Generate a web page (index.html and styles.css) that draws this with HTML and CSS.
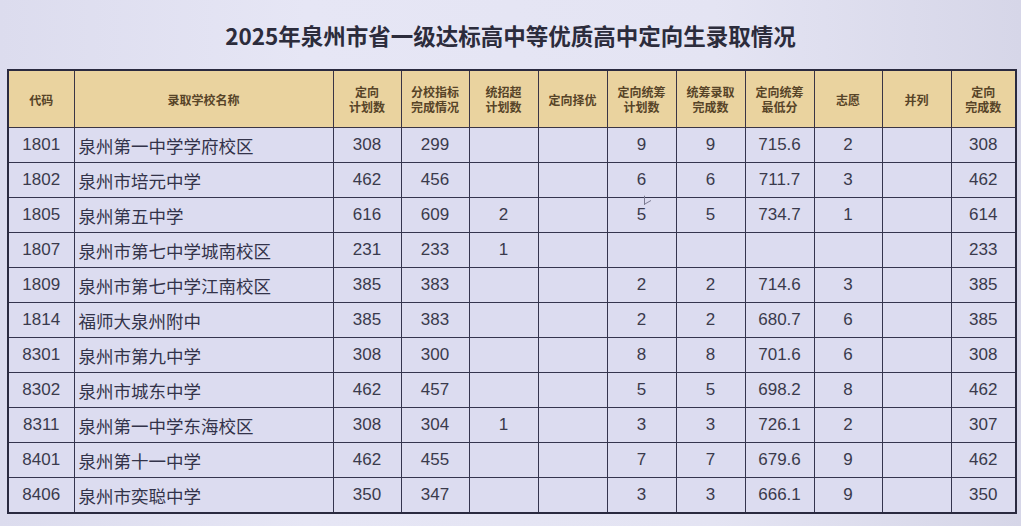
FILE: index.html
```html
<!DOCTYPE html>
<html lang="zh-CN">
<head>
<meta charset="utf-8">
<link rel="stylesheet" href="styles.css">
</head>
<body>
<div class="page">
  <h1 class="title">2025年泉州市省一级达标高中等优质高中定向生录取情况</h1>
  <table class="grid">
    <colgroup>
      <col style="width:66px"><col style="width:259px"><col style="width:68px"><col style="width:68px">
      <col style="width:69px"><col style="width:69px"><col style="width:69px"><col style="width:69px">
      <col style="width:69px"><col style="width:68px"><col style="width:69px"><col style="width:65px">
    </colgroup>
    <thead>
      <tr>
        <th>代码</th><th>录取学校名称</th><th>定向<br>计划数</th><th>分校指标<br>完成情况</th>
        <th>统招超<br>计划数</th><th>定向择优</th><th>定向统筹<br>计划数</th><th>统筹录取<br>完成数</th>
        <th>定向统筹<br>最低分</th><th>志愿</th><th>并列</th><th>定向<br>完成数</th>
      </tr>
    </thead>
    <tbody>
      <tr><td>1801</td><td class="name">泉州第一中学学府校区</td><td>308</td><td>299</td><td></td><td></td><td>9</td><td>9</td><td>715.6</td><td>2</td><td></td><td>308</td></tr>
      <tr><td>1802</td><td class="name">泉州市培元中学</td><td>462</td><td>456</td><td></td><td></td><td>6</td><td>6</td><td>711.7</td><td>3</td><td></td><td>462</td></tr>
      <tr><td>1805</td><td class="name">泉州第五中学</td><td>616</td><td>609</td><td>2</td><td></td><td class="cursor-cell">5<span class="cursor"></span></td><td>5</td><td>734.7</td><td>1</td><td></td><td>614</td></tr>
      <tr><td>1807</td><td class="name">泉州市第七中学城南校区</td><td>231</td><td>233</td><td>1</td><td></td><td></td><td></td><td></td><td></td><td></td><td>233</td></tr>
      <tr><td>1809</td><td class="name">泉州市第七中学江南校区</td><td>385</td><td>383</td><td></td><td></td><td>2</td><td>2</td><td>714.6</td><td>3</td><td></td><td>385</td></tr>
      <tr><td>1814</td><td class="name">福师大泉州附中</td><td>385</td><td>383</td><td></td><td></td><td>2</td><td>2</td><td>680.7</td><td>6</td><td></td><td>385</td></tr>
      <tr><td>8301</td><td class="name">泉州市第九中学</td><td>308</td><td>300</td><td></td><td></td><td>8</td><td>8</td><td>701.6</td><td>6</td><td></td><td>308</td></tr>
      <tr><td>8302</td><td class="name">泉州市城东中学</td><td>462</td><td>457</td><td></td><td></td><td>5</td><td>5</td><td>698.2</td><td>8</td><td></td><td>462</td></tr>
      <tr><td>8311</td><td class="name">泉州第一中学东海校区</td><td>308</td><td>304</td><td>1</td><td></td><td>3</td><td>3</td><td>726.1</td><td>2</td><td></td><td>307</td></tr>
      <tr><td>8401</td><td class="name">泉州第十一中学</td><td>462</td><td>455</td><td></td><td></td><td>7</td><td>7</td><td>679.6</td><td>9</td><td></td><td>462</td></tr>
      <tr><td>8406</td><td class="name">泉州市奕聪中学</td><td>350</td><td>347</td><td></td><td></td><td>3</td><td>3</td><td>666.1</td><td>9</td><td></td><td>350</td></tr>
    </tbody>
  </table>
</div>
</body>
</html>
```
FILE: styles.css
```css
html, body {
  margin: 0;
  padding: 0;
}
body {
  width: 1021px;
  height: 526px;
  overflow: hidden;
  background: linear-gradient(90deg, #dcdcee 0%, #e6e6f5 30%, #e4e4f3 70%, #d6d6e8 100%);
  font-family: "Liberation Sans", "Noto Sans CJK SC", sans-serif;
  color: #35354a;
}
.page {
  padding: 0 0 0 7px;
}
.title {
  margin: 0;
  height: 69px;
  padding-right: 7px;
  display: flex;
  align-items: center;
  justify-content: center;
  font-family: "Noto Sans CJK SC", sans-serif;
  font-size: 22.5px;
  font-weight: 700;
  color: #2c2c3c;
}
.grid {
  border-collapse: collapse;
  table-layout: fixed;
  width: 1008px;
  border: 2px solid #2a2a40;
}
.grid th {
  height: 56px;
  padding: 0;
  background: #ead39f;
  border: 1.5px solid #3a3444;
  font-family: "Noto Sans CJK SC", sans-serif;
  font-size: 12px;
  font-weight: 700;
  line-height: 15px;
  color: #574428;
  text-align: center;
  vertical-align: middle;
}
.grid td {
  height: 34px;
  padding: 0;
  background: #dcdcf0;
  border: 1.5px solid #34344e;
  font-size: 17px;
  color: #3a3a4c;
  text-align: center;
  vertical-align: middle;
}
.grid td.name {
  text-align: left;
  padding-left: 4px;
  font-family: "Noto Sans CJK SC", sans-serif;
  font-size: 17.5px;
  color: #33334a;
}
.grid td.cursor-cell {
  position: relative;
}
.cursor {
  position: absolute;
  left: 36px;
  top: -4px;
  width: 6px;
  height: 8px;
  border-left: 1px solid #7a7a90;
  border-bottom: 1px solid #7a7a90;
  transform: skewY(-30deg);
}
```
